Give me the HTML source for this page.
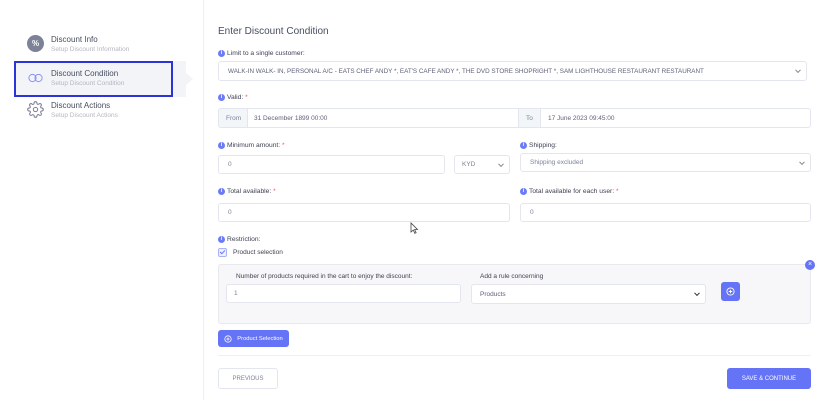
<!DOCTYPE html>
<html><head><meta charset="utf-8"><style>
*{box-sizing:border-box;margin:0;padding:0}
body{width:840px;height:400px;background:#fff;font-family:"Liberation Sans",sans-serif;position:relative;overflow:hidden;color:#3f4254}
.a{position:absolute}
.t{font-size:8px;color:#464e5f;white-space:nowrap}
.s{font-size:6.5px;color:#b5b5c3;white-space:nowrap}
.lbl{position:absolute;font-size:6.7px;color:#3f4254;white-space:nowrap;padding-left:9px;line-height:8px}
.lbl:before{content:"i";position:absolute;left:0;top:0;width:7px;height:7px;border-radius:50%;background:#6c7cf5;color:#fff;font-size:5px;line-height:7px;text-align:center;font-weight:bold}
.r{color:#f64e60}
.in{position:absolute;border:1px solid #e4e6ef;border-radius:3px;background:#fff;font-size:6.5px;color:#7e8299;padding-left:9px;display:flex;align-items:center;white-space:nowrap}
.chev{position:absolute;right:6px;top:50%;width:4px;height:4px;border-right:1px solid #888;border-bottom:1px solid #888;transform:translateY(-70%) rotate(45deg)}
.btn{position:absolute;border-radius:3px;font-size:6px;display:flex;align-items:center;justify-content:center;white-space:nowrap}
</style></head><body>
<!-- sidebar -->
<div class="a" style="left:203px;top:0;width:1px;height:400px;background:#eef0f5"></div>
<div class="a" style="left:27px;top:35px;width:17px;height:17px;border-radius:50%;background:#7e8299;color:#fff;font-size:8px;font-weight:bold;text-align:center;line-height:17px">%</div>
<div class="a t" style="left:51px;top:35px">Discount Info</div>
<div class="a s" style="left:51px;top:46px">Setup Discount Information</div>
<div class="a" style="left:14px;top:61px;width:172px;height:36px;background:#f3f4f8"></div>
<div class="a" style="left:186px;top:73px;width:0;height:0;border-top:6px solid transparent;border-bottom:6px solid transparent;border-left:7px solid #f3f4f8"></div>
<div class="a" style="left:14px;top:61px;width:159px;height:36px;border:2px solid #2c34d8"></div>
<svg class="a" style="left:28px;top:73px" width="15" height="10" viewBox="0 0 15 10"><circle cx="4.5" cy="5" r="3.6" fill="none" stroke="#8a93f5" stroke-width="1"/><circle cx="10.5" cy="5" r="3.6" fill="none" stroke="#8a93f5" stroke-width="1"/></svg>
<div class="a t" style="left:51px;top:69px">Discount Condition</div>
<div class="a s" style="left:51px;top:80px">Setup Discount Condition</div>
<svg class="a" style="left:27px;top:101px" width="17" height="17" viewBox="0 0 24 24"><path d="M12 15a3 3 0 1 0 0-6 3 3 0 0 0 0 6z M19.4 15a1.65 1.65 0 0 0 .33 1.82l.06.06a2 2 0 1 1-2.83 2.830l-.06-.06a1.650 1.650 0 0 0-1.820-.33 1.650 1.650 0 0 0-1 1.510V21a2 2 0 1 1-4 0v-.09A1.650 1.650 0 0 0 9 19.4a1.650 1.650 0 0 0-1.820.33l-.06.06a2 2 0 1 1-2.830-2.830l.06-.06A1.650 1.650 0 0 0 4.680 15a1.650 1.650 0 0 0-1.510-1H3a2 2 0 1 1 0-4h.09A1.650 1.650 0 0 0 4.600 9a1.650 1.650 0 0 0-.33-1.820l-.06-.06a2 2 0 1 1 2.830-2.830l.06.06A1.650 1.650 0 0 0 9 4.680 1.650 1.650 0 0 0 10 3.170V3a2 2 0 1 1 4 0v.09a1.650 1.650 0 0 0 1 1.510 1.650 1.650 0 0 0 1.820-.33l.06-.06a2 2 0 1 1 2.830 2.830l-.06.06A1.650 1.650 0 0 0 19.4 9a1.650 1.650 0 0 0 1.510 1H21a2 2 0 1 1 0 4h-.09a1.650 1.650 0 0 0-1.510 1z" fill="none" stroke="#7e8299" stroke-width="1.5"/></svg>
<div class="a t" style="left:51px;top:101px">Discount Actions</div>
<div class="a s" style="left:51px;top:112px">Setup Discount Actions</div>

<!-- main -->
<div class="a" style="left:218px;top:26px;font-size:10px;color:#464e5f">Enter Discount Condition</div>
<div class="lbl" style="left:218px;top:50px">Limit to a single customer:</div>
<div class="in" style="left:218px;top:61px;width:589px;height:20px;font-size:6.3px;color:#5e6278">WALK-IN WALK- IN, PERSONAL A/C - EATS CHEF ANDY *, EAT'S CAFE ANDY *, THE DVD STORE SHOPRIGHT *, SAM LIGHTHOUSE RESTAURANT RESTAURANT<span class="chev"></span></div>
<div class="lbl" style="left:218px;top:94px">Valid: <span class="r">*</span></div>
<div class="in" style="left:218px;top:108px;width:593px;height:20px;padding:0"></div>
<div class="in" style="left:218px;top:108px;width:30px;height:20px;background:#f3f6f9;color:#7e8299;padding-left:7px;border-radius:3px 0 0 3px">From</div>
<div class="a" style="left:254px;top:115px;font-size:6.5px;color:#5e6278">31 December 1899 00:00</div>
<div class="in" style="left:518px;top:108px;width:23px;height:20px;background:#f3f6f9;color:#7e8299;padding-left:7px;border-radius:0">To</div>
<div class="a" style="left:548px;top:115px;font-size:6.5px;color:#5e6278">17 June 2023 09:45:00</div>

<div class="lbl" style="left:218px;top:142px">Minimum amount: <span class="r">*</span></div>
<div class="in" style="left:218px;top:155px;width:227px;height:19px">0</div>
<div class="in" style="left:454px;top:155px;width:56px;height:19px;padding-left:7px">KYD<span class="chev"></span></div>
<div class="lbl" style="left:520px;top:142px">Shipping:</div>
<div class="in" style="left:520px;top:153px;width:291px;height:19px">Shipping excluded<span class="chev"></span></div>

<div class="lbl" style="left:218px;top:188px">Total available: <span class="r">*</span></div>
<div class="in" style="left:218px;top:203px;width:292px;height:19px">0</div>
<div class="lbl" style="left:520px;top:188px">Total available for each user: <span class="r">*</span></div>
<div class="in" style="left:520px;top:203px;width:291px;height:19px">0</div>
<svg class="a" style="left:410px;top:222px" width="9" height="12" viewBox="0 0 9 12"><path d="M1 1v9l2.3-2 1.5 3.3 1.3-.6-1.5-3.2H7.5z" fill="#fff" stroke="#444" stroke-width=".8"/></svg>

<div class="lbl" style="left:218px;top:236px">Restriction:</div>
<div class="a" style="left:218px;top:248px;width:9px;height:9px;border:1px solid #aab2f7;border-radius:2px;background:#eef0fe"></div>
<div class="a" style="left:221px;top:249px;width:3px;height:5px;border-right:1px solid #6c7cf5;border-bottom:1px solid #6c7cf5;transform:rotate(45deg)"></div>
<div class="a" style="left:233px;top:249px;font-size:6.5px;color:#3f4254">Product selection</div>

<div class="a" style="left:218px;top:264px;width:593px;height:60px;background:#f7f7f9;border:1px solid #e8e9ee;border-radius:3px"></div>
<div class="a" style="left:236px;top:273px;font-size:6.5px;color:#3f4254">Number of products required in the cart to enjoy the discount:</div>
<div class="in" style="left:226px;top:284px;width:235px;height:19px;padding-left:7px">1</div>
<div class="a" style="left:480px;top:273px;font-size:6.5px;color:#3f4254">Add a rule concerning</div>
<div class="in" style="left:471px;top:284px;width:235px;height:20px;padding-left:8px;color:#5e6278">Products<span class="chev" style="border-color:#333"></span></div>
<div class="btn" style="left:721px;top:282px;width:19px;height:19px;background:#6573f7"><svg width="9" height="9" viewBox="0 0 10 10"><circle cx="5" cy="5" r="4" fill="none" stroke="#fff" stroke-width="1"/><path d="M5 3v4M3 5h4" stroke="#fff" stroke-width="1"/></svg></div>
<div class="a" style="left:805px;top:260px;width:10px;height:10px;border-radius:50%;background:#6573f7;color:#fff;font-size:7px;line-height:10px;text-align:center">×</div>

<div class="btn" style="left:218px;top:330px;width:71px;height:17px;background:#6573f7;color:#fff;font-size:5.8px"><svg width="8" height="8" viewBox="0 0 10 10" style="margin-right:5px"><circle cx="5" cy="5" r="4" fill="none" stroke="#fff" stroke-width="1"/><path d="M5 3v4M3 5h4" stroke="#fff" stroke-width="1"/></svg>Product Selection</div>
<div class="a" style="left:218px;top:355px;width:593px;height:1px;background:#eef0f5"></div>
<div class="btn" style="left:218px;top:368px;width:60px;height:21px;border:1px solid #e4e6ef;color:#7e8299">PREVIOUS</div>
<div class="btn" style="left:727px;top:368px;width:84px;height:21px;background:#6573f7;color:#fff">SAVE &amp; CONTINUE</div>
</body></html>
